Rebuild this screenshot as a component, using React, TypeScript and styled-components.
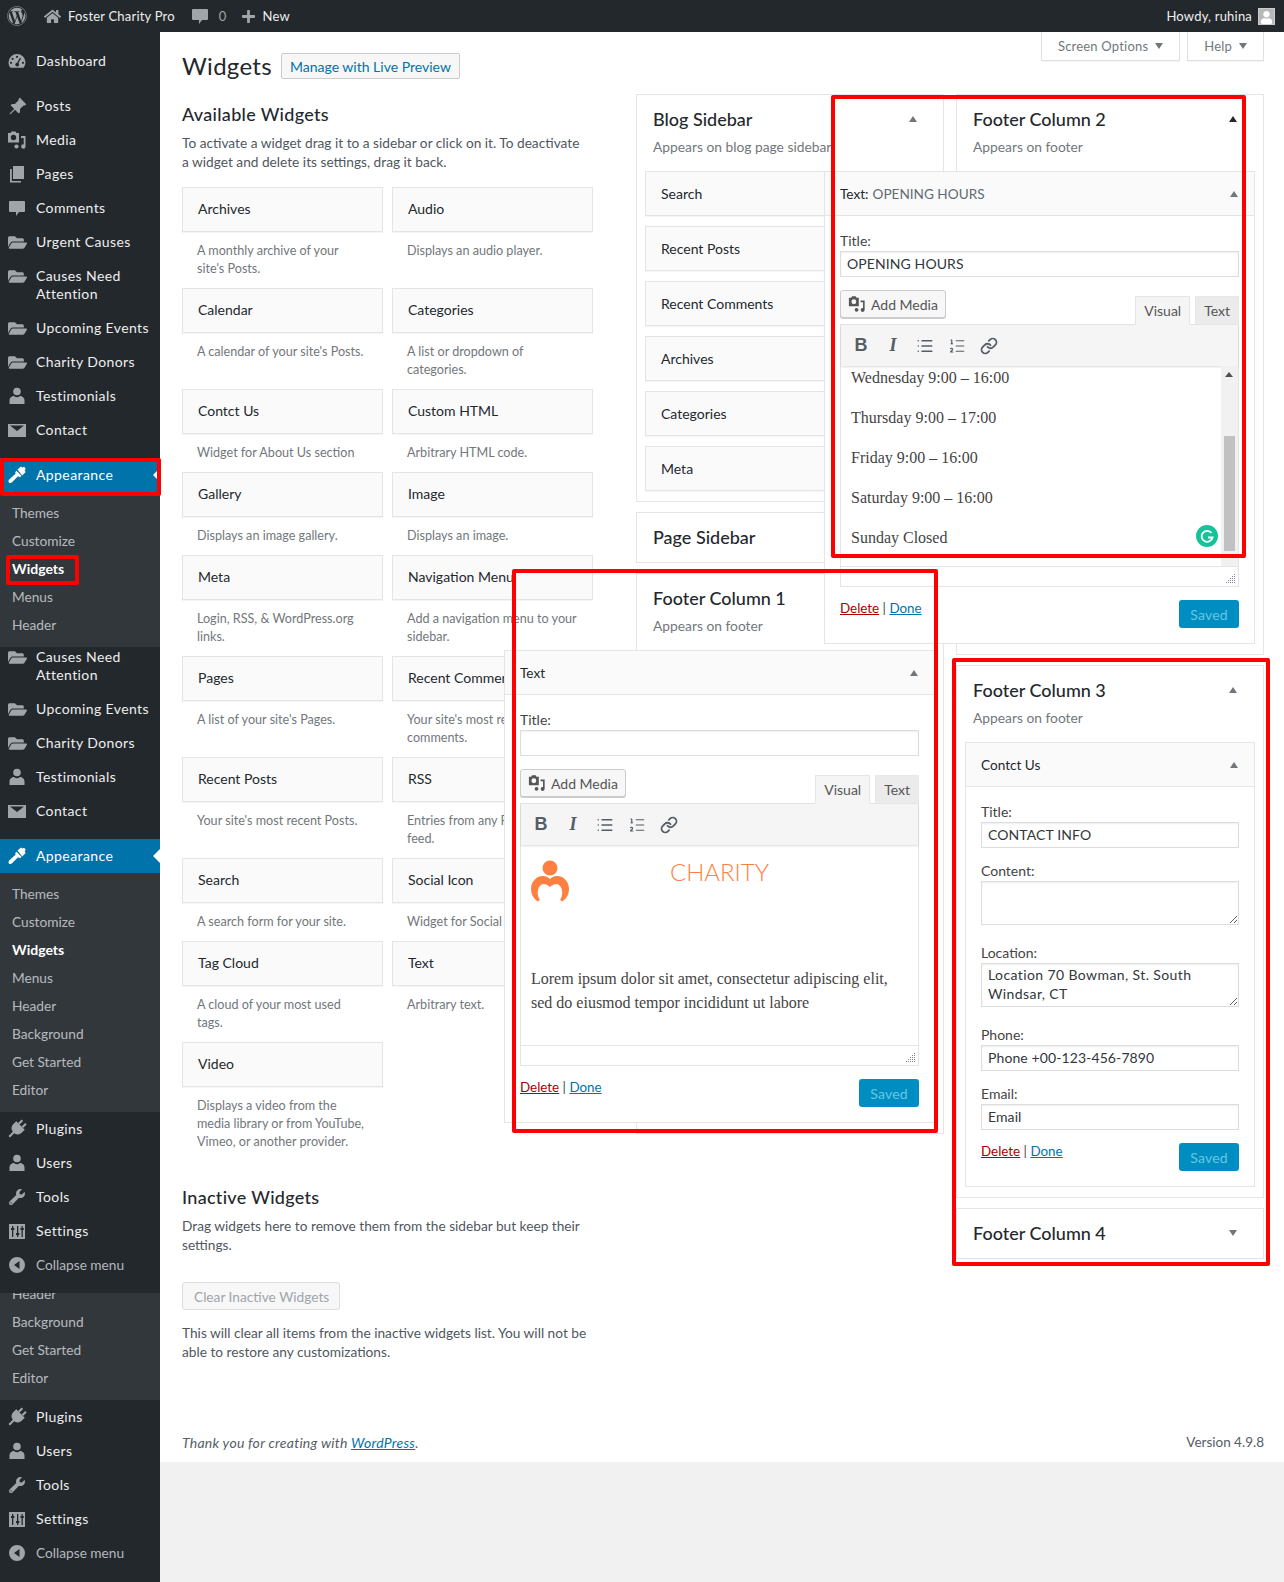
import React from 'react';
import styled, { createGlobalStyle } from 'styled-components';
import { BsPinAngleFill } from 'react-icons/bs';
import { FaFolderOpen, FaHome, FaPlus, FaUser, FaWordpress, FaWrench } from 'react-icons/fa';
import { Link, List, ListOrdered } from 'lucide-react';

const GlobalStyle = createGlobalStyle`
  html, body {
    margin: 0;
    padding: 0;
    background: #f1f1f1;
  }
  body {
    font-family: Lato, "Noto Sans", sans-serif;
    font-size: 14px;
    letter-spacing: 0;
    color: #444;
  }
  * { box-sizing: border-box; }
`;

const Root = styled.div`
  position: relative;
  width: 1284px;
  height: 1582px;
  overflow: hidden;
  padding-top: 32px;
`;

const AdminBar = styled.header`
  position: absolute;
  top: 0;
  left: 0;
  right: 0;
  height: 32px;
  background: #23282d;
  display: flex;
  align-items: center;
  justify-content: space-between;
  color: #eee;
  font-size: 13px;
  letter-spacing: 0.2px;
  z-index: 5;
`;

const BarGroup = styled.div`
  display: flex;
  align-items: center;
`;

const BarIcon = styled.span<{ $size?: number; $gap?: number }>`
  display: inline-flex;
  color: #a0a5aa;
  font-size: ${(p) => p.$size || 20}px;
  margin-right: ${(p) => p.$gap ?? 7}px;
`;

const BarLogo = styled(BarIcon)`
  margin: 0 17px 0 7px;
`;

const BarCount = styled.span`
  color: #a0a5aa;
  margin: 0 14px 0 0;
`;

const BarLabel = styled.span`
  margin-right: 15px;
`;

const Avatar = styled.span`
  width: 17px;
  height: 17px;
  margin: 0 9px 0 6px;
  background: #b8b8b8;
  border: 1px solid #ccc;
  display: inline-flex;
  align-items: flex-end;
  justify-content: center;
  color: #fff;
  font-size: 13px;
  overflow: hidden;
`;

const Layout = styled.div`
  display: flex;
  height: 1550px;
`;

const Sidebar = styled.nav`
  width: 160px;
  flex: none;
  background: #23282d;
  padding-top: 12px;
  color: #eee;
`;

const MenuRow = styled.div<{ $gap?: boolean; $active?: boolean; $tight?: boolean; $muted?: boolean }>`
  position: relative;
  display: flex;
  align-items: flex-start;
  padding: ${(p) => (p.$tight ? 1 : 8)}px 0 8px 7px;
  margin-top: ${(p) => (p.$gap ? 11 : 0)}px;
  line-height: 18px;
  font-size: ${(p) => (p.$muted ? 13.7 : 14)}px;
  letter-spacing: ${(p) => (p.$muted ? 0 : 0.4)}px;
  color: ${(p) => (p.$muted ? '#b4b9be' : p.$active ? '#fff' : '#eee')};
  background: ${(p) => (p.$active ? '#0073aa' : 'transparent')};
  ${(p) =>
    p.$active
      ? `&::after {
    content: '';
    position: absolute;
    right: 0;
    top: 10px;
    border: 7px solid transparent;
    border-left-width: 0;
    border-right-color: #fff;
  }`
      : ''}
`;

const MenuIcon = styled.span<{ $active?: boolean }>`
  width: 20px;
  height: 18px;
  flex: none;
  margin-right: 9px;
  display: inline-flex;
  align-items: center;
  justify-content: center;
  font-size: 19px;
  color: ${(p) => (p.$active ? '#fff' : '#a0a5aa')};
`;

const SubMenu = styled.div`
  background: #32373c;
  padding: 7px 0 8px;
  overflow: hidden;
`;

const ClippedSubMenu = styled(SubMenu)`
  padding-top: 0;
  & > div:first-child {
    margin-top: -13px;
  }
`;

const SubItem = styled.div<{ $current?: boolean }>`
  position: relative;
  height: 28px;
  line-height: 28px;
  padding-left: 12px;
  font-size: ${(p) => (p.$current ? 14 : 13.7)}px;
  color: ${(p) => (p.$current ? '#fff' : 'rgba(240, 245, 250, 0.7)')};
  font-weight: ${(p) => (p.$current ? 700 : 400)};
`;

const CollapseGap = styled.div`
  height: 11px;
`;

const Highlight = styled.div<{ $top: number; $left: number; $w: number; $h: number }>`
  position: absolute;
  top: ${(p) => p.$top}px;
  left: ${(p) => p.$left}px;
  width: ${(p) => p.$w}px;
  height: ${(p) => p.$h}px;
  border: 4px solid #f00;
  border-radius: 2px;
  pointer-events: none;
  z-index: 20;
`;

const Main = styled.main`
  flex: 1;
  min-width: 0;
  display: flex;
  flex-direction: column;
`;

const Content = styled.div`
  position: relative;
  height: 1430px;
  background: #fff;
  padding: 0 20px 0 22px;
  display: flex;
  flex-direction: column;
`;

const MetaLinks = styled.div`
  position: absolute;
  top: 0;
  right: 20px;
  display: flex;
  gap: 7px;
`;

const MetaTab = styled.div`
  height: 29px;
  padding: 0 16px;
  display: flex;
  align-items: center;
  gap: 7px;
  background: #fff;
  border: 1px solid #e0e0e0;
  border-top: 0;
  box-shadow: 0 1px 1px rgba(0, 0, 0, 0.04);
  color: #72777c;
  font-size: 13px;
  letter-spacing: 0.2px;
`;

const Columns = styled.div`
  display: grid;
  grid-template-columns: 411px 628px;
  justify-content: space-between;
`;

const TitleRow = styled.div`
  display: flex;
  align-items: center;
  gap: 9px;
  margin-top: 21px;
  height: 26px;
`;

const PageTitle = styled.h1`
  margin: -2px 0 0;
  font-size: 24px;
  font-weight: 400;
  letter-spacing: 0.3px;
  color: #23282d;
`;

const LiveButton = styled.span`
  display: inline-flex;
  align-items: center;
  height: 26px;
  padding: 0 8px;
  border: 1px solid #ccc;
  border-radius: 2px;
  background: #f7f7f7;
  color: #0073aa;
  font-size: 14px;
`;

const SectionTitle = styled.h2<{ $top: number }>`
  margin: ${(p) => p.$top}px 0 0;
  font-size: 18px;
  line-height: 24px;
  font-weight: 500;
  letter-spacing: 0.3px;
  color: #23282d;
`;

const Paragraph = styled.p<{ $top?: number }>`
  margin: ${(p) => p.$top ?? 4}px 0 0;
  font-size: 13.7px;
  line-height: 19px;
  white-space: nowrap;
  color: #50575e;
`;

const WidgetGrid = styled.div`
  display: grid;
  grid-template-columns: 201px 201px;
  column-gap: 9px;
  margin-top: 16px;
`;

const WidgetCard = styled.div`
  min-width: 0;
`;

const WidgetHead = styled.div`
  height: 45px;
  padding: 0 15px 2px;
  display: flex;
  align-items: center;
  white-space: nowrap;
  background: #fafafa;
  border: 1px solid #e5e5e5;
  box-shadow: 0 1px 1px rgba(0, 0, 0, 0.04);
  color: #23282d;
  font-size: 14px;
`;

const WidgetDesc = styled.div`
  padding: 10px 0 10px 15px;
  white-space: nowrap;
  font-size: 12.6px;
  line-height: 18px;
  color: #72777c;
`;

const ClearButton = styled.span`
  display: inline-flex;
  align-self: flex-start;
  align-items: center;
  width: 158px;
  height: 28px;
  margin-top: 28px;
  padding: 0 11px;
  white-space: nowrap;
  border: 1px solid #ddd;
  border-radius: 3px;
  background: #f7f7f7;
  color: #a0a5aa;
  font-size: 13.7px;
`;

const LeftCol = styled.div`
  display: flex;
  flex-direction: column;
`;

const SidebarCols = styled.div`
  display: grid;
  grid-template-columns: 308px 308px;
  column-gap: 12px;
  padding-top: 62px;
  align-items: start;
`;

const Stack = styled.div`
  display: flex;
  flex-direction: column;
  gap: 10px;
`;

const SidebarBox = styled.section`
  background: #fff;
  border: 1px solid #e5e5e5;
  padding: 0 8px;
`;

const SidebarHead = styled.div<{ $closed?: boolean }>`
  position: relative;
  height: ${(p) => (p.$closed ? 49 : 76)}px;
  padding: 12px 7px 0 8px;
`;

const SidebarName = styled.h3`
  margin: 0;
  font-size: 18px;
  line-height: 24px;
  font-weight: 500;
  color: #23282d;
`;

const SidebarDesc = styled.div`
  margin-top: 7px;
  font-size: 13.8px;
  line-height: 18px;
  color: #72777c;
  white-space: nowrap;
`;

const Caret = styled.span<{ $down?: boolean; $dark?: boolean }>`
  position: absolute;
  right: 16px;
  top: 50%;
  margin-top: -3px;
  border-left: 4.5px solid transparent;
  border-right: 4.5px solid transparent;
  ${(p) => (p.$down ? 'border-top' : 'border-bottom')}: 6px solid ${(p) => (p.$dark ? '#23282d' : '#72777c')};
`;

const HeadCaret = styled(Caret)`
  top: 24px;
  right: 18px;
`;

const WidgetItem = styled(WidgetHead)`
  position: relative;
  margin-bottom: 10px;
  padding-bottom: 0;
`;

const OpenWidget = styled.div`
  position: relative;
  z-index: 3;
  margin: 0 0 10px -141px;
  width: 431px;
  background: #fff;
  border: 1px solid #e5e5e5;
`;

const OpenWidgetNarrow = styled(OpenWidget)`
  margin-left: 0;
  width: 290px;
`;

const OpenTitle = styled.div`
  position: relative;
  height: 44px;
  padding: 0 15px;
  display: flex;
  align-items: center;
  background: #fafafa;
  border-bottom: 1px solid #e5e5e5;
  color: #23282d;
  font-size: 13.6px;
`;

const TitleExtra = styled.span`
  color: #606a73;
  margin-left: 4px;
`;

const OpenBody = styled.div`
  padding: 16px 15px 15px;
`;

const FieldLabel = styled.label`
  display: block;
  line-height: 18px;
  font-size: 14px;
  color: #444;
  margin-bottom: 1px;
`;

const TextField = styled.input`
  display: block;
  width: 100%;
  height: 26px;
  padding: 0 6px 1px;
  border: 1px solid #ddd;
  box-shadow: inset 0 1px 2px rgba(0, 0, 0, 0.07);
  font: inherit;
  letter-spacing: 0.1px;
  color: #32373c;
  background: #fff;
  margin-bottom: 14px;
  outline: 0;
`;

const TextBlock = styled.textarea`
  display: block;
  width: 100%;
  height: 44px;
  padding: 1px 6px;
  border: 1px solid #ddd;
  box-shadow: inset 0 1px 2px rgba(0, 0, 0, 0.07);
  font: inherit;
  letter-spacing: 0.4px;
  line-height: 19px;
  color: #32373c;
  margin-bottom: 19px;
  outline: 0;
`;

const EditorTools = styled.div`
  display: flex;
  align-items: flex-end;
  justify-content: space-between;
  height: 34px;
  margin-top: -1px;
`;

const AddMedia = styled.span`
  display: inline-flex;
  align-items: center;
  gap: 5px;
  height: 28px;
  margin-bottom: 6px;
  padding: 0 7px;
  border: 1px solid #ccc;
  border-radius: 3px;
  background: #f7f7f7;
  box-shadow: 0 1px 0 #ccc;
  color: #555;
  font-size: 14px;
`;

const EditorTabs = styled.div`
  display: flex;
  gap: 5px;
  margin-bottom: -1px;
  position: relative;
  z-index: 1;
`;

const EditorTab = styled.span<{ $on?: boolean }>`
  display: inline-flex;
  align-items: center;
  justify-content: center;
  height: 29px;
  padding: 0 8px;
  border: 1px solid ${(p) => (p.$on ? '#e5e5e5' : '#e8e8e8')};
  border-bottom-color: ${(p) => (p.$on ? '#f5f5f5' : '#e5e5e5')};
  background: ${(p) => (p.$on ? '#f5f5f5' : '#ebebeb')};
  color: #555;
  font-size: 14px;
`;

const EditorFrame = styled.div`
  border: 1px solid #e5e5e5;
  border-top-width: 1px;
`;

const Toolbar = styled.div`
  display: flex;
  align-items: center;
  height: 41px;
  padding-left: 4px;
  background: #f5f5f5;
  box-shadow: 0 1px 2px rgba(0, 0, 0, 0.15);
  position: relative;
  color: #555d66;
`;

const ToolButton = styled.span`
  width: 32px;
  display: inline-flex;
  justify-content: center;
  align-items: center;
`;

const BoldGlyph = styled.span`
  font-family: "Liberation Sans", sans-serif;
  font-size: 18px;
  font-weight: 700;
`;

const ItalicGlyph = styled(BoldGlyph)`
  font-family: "Liberation Serif", serif;
  font-style: italic;
`;

const EditorBody = styled.div`
  height: 200px;
  display: flex;
  overflow: hidden;
  font-family: "Liberation Serif", serif;
  font-size: 16px;
  line-height: 24px;
  color: #444;
`;

const EditorText = styled.div`
  position: relative;
  flex: 1;
  min-width: 0;
  padding: 0 10px;
`;

const HoursLine = styled.p`
  margin: 0 0 16px;
`;

const Scrollbar = styled.div`
  width: 17px;
  flex: none;
  background: #f1f1f1;
  padding-top: 70px;
  position: relative;
  &::before {
    content: '';
    position: absolute;
    top: 6px;
    left: 4px;
    border-left: 4px solid transparent;
    border-right: 4px solid transparent;
    border-bottom: 5px solid #505050;
  }
`;

const ScrollThumb = styled.div`
  width: 11px;
  height: 115px;
  margin-left: 3px;
  background: #c1c1c1;
`;

const GrammarlyBadge = styled.span`
  position: absolute;
  right: 3px;
  top: 159px;
  width: 22px;
  height: 22px;
  display: block;
`;

const LogoRow = styled.div`
  display: grid;
  grid-template-columns: 1fr auto 1fr;
  padding-top: 15px;
  height: 122px;
`;

const CharityWord = styled.span`
  font-family: Lato, sans-serif;
  font-weight: 300;
  font-size: 24px;
  line-height: 24px;
  color: #ff7f41;
`;

const Lorem = styled.p`
  margin: 0;
`;

const StatusBar = styled.div`
  position: relative;
  height: 20px;
  border-top: 1px solid #e5e5e5;
`;

const Grip = styled.svg`
  position: absolute;
  right: 2px;
  bottom: 2px;
`;

const Actions = styled.div<{ $afterField?: boolean }>`
  display: flex;
  justify-content: space-between;
  align-items: flex-start;
  margin-top: ${(p) => (p.$afterField ? -1 : 13)}px;
`;

const ActionLinks = styled.div`
  font-size: 13.4px;
  line-height: 18px;
  margin-top: -1px;
`;

const DeleteLink = styled.a`
  color: #a00;
  text-decoration: underline;
`;

const DoneLink = styled.a`
  color: #0073aa;
  text-decoration: underline;
`;

const SavedButton = styled.span`
  display: inline-flex;
  align-items: center;
  justify-content: center;
  width: 60px;
  height: 28px;
  border-radius: 3px;
  background: #008ec2;
  color: #66c6e4;
  font-size: 14px;
  letter-spacing: 0.2px;
`;

const Footer = styled.footer`
  margin-top: auto;
  height: 40px;
  padding-top: 12px;
  display: flex;
  justify-content: space-between;
  color: #555d66;
  font-size: 13.5px;
`;

const Thanks = styled.span`
  font-size: 14px;
  font-style: italic;
  letter-spacing: 0.25px;
  a {
    color: #0073aa;
    text-decoration: underline;
  }
`;

const Dropdown = styled.span`
  border-left: 4px solid transparent;
  border-right: 4px solid transparent;
  border-top: 6px solid #72777c;
`;

const HoleFill = '#23282d';

const Svg = ({ children, size = 20 }: { children: React.ReactNode; size?: number }) => (
  <svg width={size} height={size} viewBox="0 0 20 20" fill="currentColor" fillRule="evenodd">
    {children}
  </svg>
);

const DashIcon = () => (
  <Svg>
    <path d="M10 3a8.5 8.5 0 0 0-8.5 8.5c0 2 .7 3.8 1.9 5.2h13.2a8.5 8.5 0 0 0 1.9-5.2A8.5 8.5 0 0 0 10 3z" />
    <g fill={HoleFill}>
      <circle cx="10" cy="5.8" r="1.1" />
      <circle cx="5.6" cy="7.8" r="1.1" />
      <circle cx="4" cy="11.8" r="1.1" />
      <circle cx="16" cy="11.8" r="1.1" />
      <circle cx="10.2" cy="13.6" r="1.9" />
      <path d="M9.4 13l3.6-6.2 1.1.6-3.5 6.2z" />
    </g>
  </Svg>
);

const MediaIcon = ({ size = 20 }: { size?: number }) => (
  <Svg size={size}>
    <path d="M1 3h2.500l1-1.500h4l1 1.500H12v9.500H1zM6.500 4.800a2.700 2.700 0 1 0 0 5.400 2.700 2.700 0 0 0 0-5.400z" />
    <path d="M14 6h4.500v10.500a2.200 2.200 0 1 1-1.800-2.100V8H14z" />
    <circle cx="9.500" cy="16.500" r="2.100" />
  </Svg>
);

const PagesIcon = () => (
  <Svg>
    <path d="M6 2h11v13H6z" />
    <path d="M3 5h1.800v12H14v1.500H3z" />
  </Svg>
);

const CommentIcon = () => (
  <Svg>
    <path d="M3 3h14a1 1 0 0 1 1 1v9a1 1 0 0 1-1 1h-5l-3 4v-4H3a1 1 0 0 1-1-1V4a1 1 0 0 1 1-1z" />
  </Svg>
);

const MailIcon = () => (
  <Svg>
    <path d="M1 4h18v13H1zM3 5.500l7 5.500 7-5.500z" />
  </Svg>
);

const BrushIcon = () => (
  <Svg>
    <path d="M10.500 4.500L14 1.500l1.200 1 2-.8 1.500 2-1 1.800 1 1.500-3.500 3.500z" />
    <path d="M9.500 5.800l5 5-1.500 1.500-2-1-6 6C4 18.500 1.800 18.300 1.500 16.500c-.1-1 .5-1.800 1.200-2.400l6-5.500-.6-1.300z" />
  </Svg>
);

const PluginIcon = () => (
  <Svg>
    <g transform="rotate(45 10 10)">
      <path d="M6.500 0h2.200v5H6.500zM11.500 0h2.200v5h-2.200z" />
      <path d="M4 5h12v4a6 6 0 0 1-5 5.900V21H9v-6.100A6 6 0 0 1 4 9z" />
    </g>
  </Svg>
);

const UserIcon = () => (
  <Svg>
    <circle cx="10" cy="5.500" r="3.800" />
    <path d="M2.500 18v-3.500C2.500 11.500 5 10 7 10c1 .9 2 1.300 3 1.300s2-.4 3-1.300c2 0 4.500 1.500 4.500 4.500V18z" />
  </Svg>
);

const SettingsIcon = () => (
  <Svg>
    <path d="M2 3h16v15H2zM5 5v2H4v2h1v7h1.300V9h1V7h-1V5zM10 5v7H9v2h1v2h1.300v-2h1v-2h-1V5zM14.500 5v2h-1v2h1v7h1.300V9h1V7h-1V5z" />
  </Svg>
);

const CollapseIcon = () => (
  <Svg>
    <path d="M10 2a8 8 0 1 1 0 16 8 8 0 0 1 0-16zM12.500 6L7 10l5.500 4z" />
  </Svg>
);

const GripDots = () => (
  <Grip width="10" height="10" viewBox="0 0 10 10" fill="#8c7f9c">
    {[
      [8, 0], [8, 2], [6, 2], [8, 4], [6, 4], [4, 4], [8, 6], [6, 6], [4, 6], [2, 6], [8, 8], [6, 8], [4, 8], [2, 8], [0, 8],
    ].map(([x, y]) => (
      <rect key={`${x}-${y}`} x={x} y={y} width="1" height="1" />
    ))}
  </Grip>
);

const GrammarlyIcon = () => (
  <GrammarlyBadge>
    <svg width="22" height="22" viewBox="0 0 22 22">
      <circle cx="11" cy="11" r="11" fill="#15c39a" />
      <path d="M15.500 8a5.500 5.500 0 1 0 1 4.500H12" fill="none" stroke="#fff" strokeWidth="1.800" />
    </svg>
  </GrammarlyBadge>
);

const CharityLogo = () => (
  <svg width="38" height="42" viewBox="0 0 38 42" fill="#ff7f41">
    <circle cx="19" cy="8" r="7.500" />
    <path d="M6 41C2 38 0 34 0 29 0 22 5 16 12 16c3 0 5 1 7 3 2-2 4-3 7-3 7 0 12 6 12 13 0 5-2 9-6 12-1 .5-3 0-2.500-2 3.500-5 1.500-14-3.500-15-3 0-5 1-7 3-2-2-4-3-7-3-5 1-7 10-3.500 15 .5 2-1.500 2.500-2.500 2z" />
  </svg>
);

type RowData = { label: string; icon: React.ReactNode };

const folder = <FaFolderOpen />;
const user = <UserIcon />;
const topRows: RowData[] = [
  { label: 'Posts', icon: <BsPinAngleFill /> },
  { label: 'Media', icon: <MediaIcon /> },
  { label: 'Pages', icon: <PagesIcon /> },
  { label: 'Comments', icon: <CommentIcon /> },
  { label: 'Urgent Causes', icon: folder },
];
const causeRows: RowData[] = [
  { label: 'Upcoming Events', icon: folder },
  { label: 'Charity Donors', icon: folder },
  { label: 'Testimonials', icon: user },
  { label: 'Contact', icon: <MailIcon /> },
];
const bottomRows: RowData[] = [
  { label: 'Plugins', icon: <PluginIcon /> },
  { label: 'Users', icon: user },
  { label: 'Tools', icon: <FaWrench size={16} /> },
  { label: 'Settings', icon: <SettingsIcon /> },
];

const Row = ({ row }: { row: RowData }) => (
  <MenuRow>
    <MenuIcon>{row.icon}</MenuIcon>
    {row.label}
  </MenuRow>
);

const Appearance = () => (
  <MenuRow $gap $active>
    <MenuIcon $active>
      <BrushIcon />
    </MenuIcon>
    Appearance
  </MenuRow>
);

const BottomMenu = () => (
  <>
    {bottomRows.map((r) => (
      <Row key={r.label} row={r} />
    ))}
    <MenuRow $muted>
      <MenuIcon>
        <CollapseIcon />
      </MenuIcon>
      Collapse menu
    </MenuRow>
  </>
);

const shortSub = ['Themes', 'Customize', 'Widgets', 'Menus', 'Header'];
const restSub = ['Background', 'Get Started', 'Editor'];

const available: [string, string[]][] = [
  ['Archives', ['A monthly archive of your', "site's Posts."]],
  ['Audio', ['Displays an audio player.']],
  ['Calendar', ["A calendar of your site's Posts."]],
  ['Categories', ['A list or dropdown of', 'categories.']],
  ['Contct Us', ['Widget for About Us section']],
  ['Custom HTML', ['Arbitrary HTML code.']],
  ['Gallery', ['Displays an image gallery.']],
  ['Image', ['Displays an image.']],
  ['Meta', ['Login, RSS, & WordPress.org', 'links.']],
  ['Navigation Menu', ['Add a navigation menu to your', 'sidebar.']],
  ['Pages', ["A list of your site's Pages."]],
  ['Recent Comments', ["Your site's most recent", 'comments.']],
  ['Recent Posts', ["Your site's most recent Posts."]],
  ['RSS', ['Entries from any RSS or Atom', 'feed.']],
  ['Search', ['A search form for your site.']],
  ['Social Icon', ['Widget for Social Icon']],
  ['Tag Cloud', ['A cloud of your most used', 'tags.']],
  ['Text', ['Arbitrary text.']],
  ['Video', ['Displays a video from the', 'media library or from YouTube,', 'Vimeo, or another provider.']],
];

const blogWidgets = ['Search', 'Recent Posts', 'Recent Comments', 'Archives', 'Categories', 'Meta'];
const hours = ['Wednesday 9:00 – 16:00', 'Thursday 9:00 – 17:00', 'Friday 9:00 – 16:00', 'Saturday 9:00 – 16:00', 'Sunday Closed'];

const EditorWidget = ({ title, extra, value, children }: { title: string; extra?: string; value: string; children: React.ReactNode }) => (
  <OpenWidget>
    <OpenTitle>
      {title}
      {extra && <TitleExtra>{extra}</TitleExtra>}
      <Caret />
    </OpenTitle>
    <OpenBody>
      <FieldLabel>Title:</FieldLabel>
      <TextField readOnly value={value} />
      <EditorTools>
        <AddMedia>
          <MediaIcon size={18} />
          Add Media
        </AddMedia>
        <EditorTabs>
          <EditorTab $on>Visual</EditorTab>
          <EditorTab>Text</EditorTab>
        </EditorTabs>
      </EditorTools>
      <EditorFrame>
        <Toolbar>
          <ToolButton>
            <BoldGlyph>B</BoldGlyph>
          </ToolButton>
          <ToolButton>
            <ItalicGlyph>I</ItalicGlyph>
          </ToolButton>
          <ToolButton>
            <List size={18} strokeWidth={2} />
          </ToolButton>
          <ToolButton>
            <ListOrdered size={18} strokeWidth={1.6} />
          </ToolButton>
          <ToolButton>
            <Link size={18} strokeWidth={2.4} />
          </ToolButton>
        </Toolbar>
        <EditorBody>{children}</EditorBody>
        <StatusBar>
          <GripDots />
        </StatusBar>
      </EditorFrame>
      <Actions>
        <ActionLinks>
          <DeleteLink>Delete</DeleteLink> | <DoneLink>Done</DoneLink>
        </ActionLinks>
        <SavedButton>Saved</SavedButton>
      </Actions>
    </OpenBody>
  </OpenWidget>
);

const App = () => (
  <Root>
    <GlobalStyle />
    <AdminBar>
      <BarGroup>
        <BarLogo $size={20}>
          <FaWordpress />
        </BarLogo>
        <BarIcon $size={17}>
          <FaHome />
        </BarIcon>
        <BarLabel>Foster Charity Pro</BarLabel>
        <BarIcon $gap={9}>
          <CommentIcon />
        </BarIcon>
        <BarCount>0</BarCount>
        <BarIcon $size={15}>
          <FaPlus />
        </BarIcon>
        <span>New</span>
      </BarGroup>
      <BarGroup>
        Howdy, ruhina
        <Avatar>
          <FaUser />
        </Avatar>
      </BarGroup>
    </AdminBar>

    <Layout>
      <Sidebar>
        <MenuRow>
          <MenuIcon>
            <DashIcon />
          </MenuIcon>
          Dashboard
        </MenuRow>
        <CollapseGap />
        {topRows.map((r) => (
          <Row key={r.label} row={r} />
        ))}
        <MenuRow>
          <MenuIcon>{folder}</MenuIcon>
          <span>
            Causes Need
            <br />
            Attention
          </span>
        </MenuRow>
        {causeRows.map((r) => (
          <Row key={r.label} row={r} />
        ))}
        <Appearance />
        <SubMenu>
          {shortSub.map((s) => (
            <SubItem key={s} $current={s === 'Widgets'}>
              {s}
            </SubItem>
          ))}
        </SubMenu>
        <MenuRow $tight>
          <MenuIcon>{folder}</MenuIcon>
          <span>
            Causes Need
            <br />
            Attention
          </span>
        </MenuRow>
        {causeRows.map((r) => (
          <Row key={r.label} row={r} />
        ))}
        <Appearance />
        <SubMenu>
          {[...shortSub, ...restSub].map((s) => (
            <SubItem key={s} $current={s === 'Widgets'}>
              {s}
            </SubItem>
          ))}
        </SubMenu>
        <BottomMenu />
        <CollapseGap />
        <ClippedSubMenu>
          {['Header', ...restSub].map((s) => (
            <SubItem key={s}>{s}</SubItem>
          ))}
        </ClippedSubMenu>
        <BottomMenu />
      </Sidebar>

      <Main>
        <Content>
          <MetaLinks>
            <MetaTab>
              Screen Options <Dropdown />
            </MetaTab>
            <MetaTab>
              Help <Dropdown />
            </MetaTab>
          </MetaLinks>
          <Columns>
            <LeftCol>
              <TitleRow>
                <PageTitle>Widgets</PageTitle>
                <LiveButton>Manage with Live Preview</LiveButton>
              </TitleRow>
              <SectionTitle $top={23}>Available Widgets</SectionTitle>
              <Paragraph $top={7}>
                To activate a widget drag it to a sidebar or click on it. To deactivate
                <br />a widget and delete its settings, drag it back.
              </Paragraph>
              <WidgetGrid>
                {available.map(([name, lines]) => (
                  <WidgetCard key={name}>
                    <WidgetHead>{name}</WidgetHead>
                    <WidgetDesc>
                      {lines.map((l) => (
                        <div key={l}>{l}</div>
                      ))}
                    </WidgetDesc>
                  </WidgetCard>
                ))}
              </WidgetGrid>
              <SectionTitle $top={24}>Inactive Widgets</SectionTitle>
              <Paragraph $top={7}>
                Drag widgets here to remove them from the sidebar but keep their
                <br />
                settings.
              </Paragraph>
              <ClearButton>Clear Inactive Widgets</ClearButton>
              <Paragraph $top={13}>
                This will clear all items from the inactive widgets list. You will not be
                <br />
                able to restore any customizations.
              </Paragraph>
            </LeftCol>

            <SidebarCols>
              <Stack>
                <SidebarBox>
                  <SidebarHead>
                    <SidebarName>Blog Sidebar</SidebarName>
                    <SidebarDesc>Appears on blog page sidebar</SidebarDesc>
                    <HeadCaret />
                  </SidebarHead>
                  {blogWidgets.map((w) => (
                    <WidgetItem key={w}>{w}</WidgetItem>
                  ))}
                </SidebarBox>
                <SidebarBox>
                  <SidebarHead $closed>
                    <SidebarName>Page Sidebar</SidebarName>
                  </SidebarHead>
                </SidebarBox>
                <SidebarBox>
                  <SidebarHead>
                    <SidebarName>Footer Column 1</SidebarName>
                    <SidebarDesc>Appears on footer</SidebarDesc>
                  </SidebarHead>
                  <EditorWidget title="Text" value="">
                    <EditorText>
                      <LogoRow>
                        <CharityLogo />
                        <CharityWord>CHARITY</CharityWord>
                      </LogoRow>
                      <Lorem>Lorem ipsum dolor sit amet, consectetur adipiscing elit, sed do eiusmod tempor incididunt ut labore</Lorem>
                    </EditorText>
                  </EditorWidget>
                </SidebarBox>
              </Stack>

              <Stack>
                <SidebarBox>
                  <SidebarHead>
                    <SidebarName>Footer Column 2</SidebarName>
                    <SidebarDesc>Appears on footer</SidebarDesc>
                    <HeadCaret $dark />
                  </SidebarHead>
                  <EditorWidget title="Text:" extra="OPENING HOURS" value="OPENING HOURS">
                    <EditorText>
                      {hours.map((h) => (
                        <HoursLine key={h}>{h}</HoursLine>
                      ))}
                      <GrammarlyIcon />
                    </EditorText>
                    <Scrollbar>
                      <ScrollThumb />
                    </Scrollbar>
                  </EditorWidget>
                </SidebarBox>
                <SidebarBox>
                  <SidebarHead>
                    <SidebarName>Footer Column 3</SidebarName>
                    <SidebarDesc>Appears on footer</SidebarDesc>
                    <HeadCaret />
                  </SidebarHead>
                  <OpenWidgetNarrow>
                    <OpenTitle>
                      Contct Us
                      <Caret />
                    </OpenTitle>
                    <OpenBody>
                      <FieldLabel>Title:</FieldLabel>
                      <TextField readOnly value="CONTACT INFO" />
                      <FieldLabel>Content:</FieldLabel>
                      <TextBlock readOnly value="" />
                      <FieldLabel>Location:</FieldLabel>
                      <TextBlock readOnly value="Location 70 Bowman, St. South Windsar, CT" />
                      <FieldLabel>Phone:</FieldLabel>
                      <TextField readOnly value="Phone +00-123-456-7890" />
                      <FieldLabel>Email:</FieldLabel>
                      <TextField readOnly value="Email" />
                      <Actions $afterField>
                        <ActionLinks>
                          <DeleteLink>Delete</DeleteLink> | <DoneLink>Done</DoneLink>
                        </ActionLinks>
                        <SavedButton>Saved</SavedButton>
                      </Actions>
                    </OpenBody>
                  </OpenWidgetNarrow>
                </SidebarBox>
                <SidebarBox>
                  <SidebarHead $closed>
                    <SidebarName>Footer Column 4</SidebarName>
                    <HeadCaret $down />
                  </SidebarHead>
                </SidebarBox>
              </Stack>
            </SidebarCols>
          </Columns>
          <Footer>
            <Thanks>
              Thank you for creating with <a>WordPress</a>.
            </Thanks>
            <span>Version 4.9.8</span>
          </Footer>
        </Content>
      </Main>
    </Layout>

    <Highlight $top={458} $left={0} $w={161} $h={38} />
    <Highlight $top={555} $left={6} $w={73} $h={30} />
    <Highlight $top={95} $left={831} $w={415} $h={463} />
    <Highlight $top={569} $left={512} $w={426} $h={564} />
    <Highlight $top={658} $left={952} $w={318} $h={608} />
  </Root>
);

export default App;
